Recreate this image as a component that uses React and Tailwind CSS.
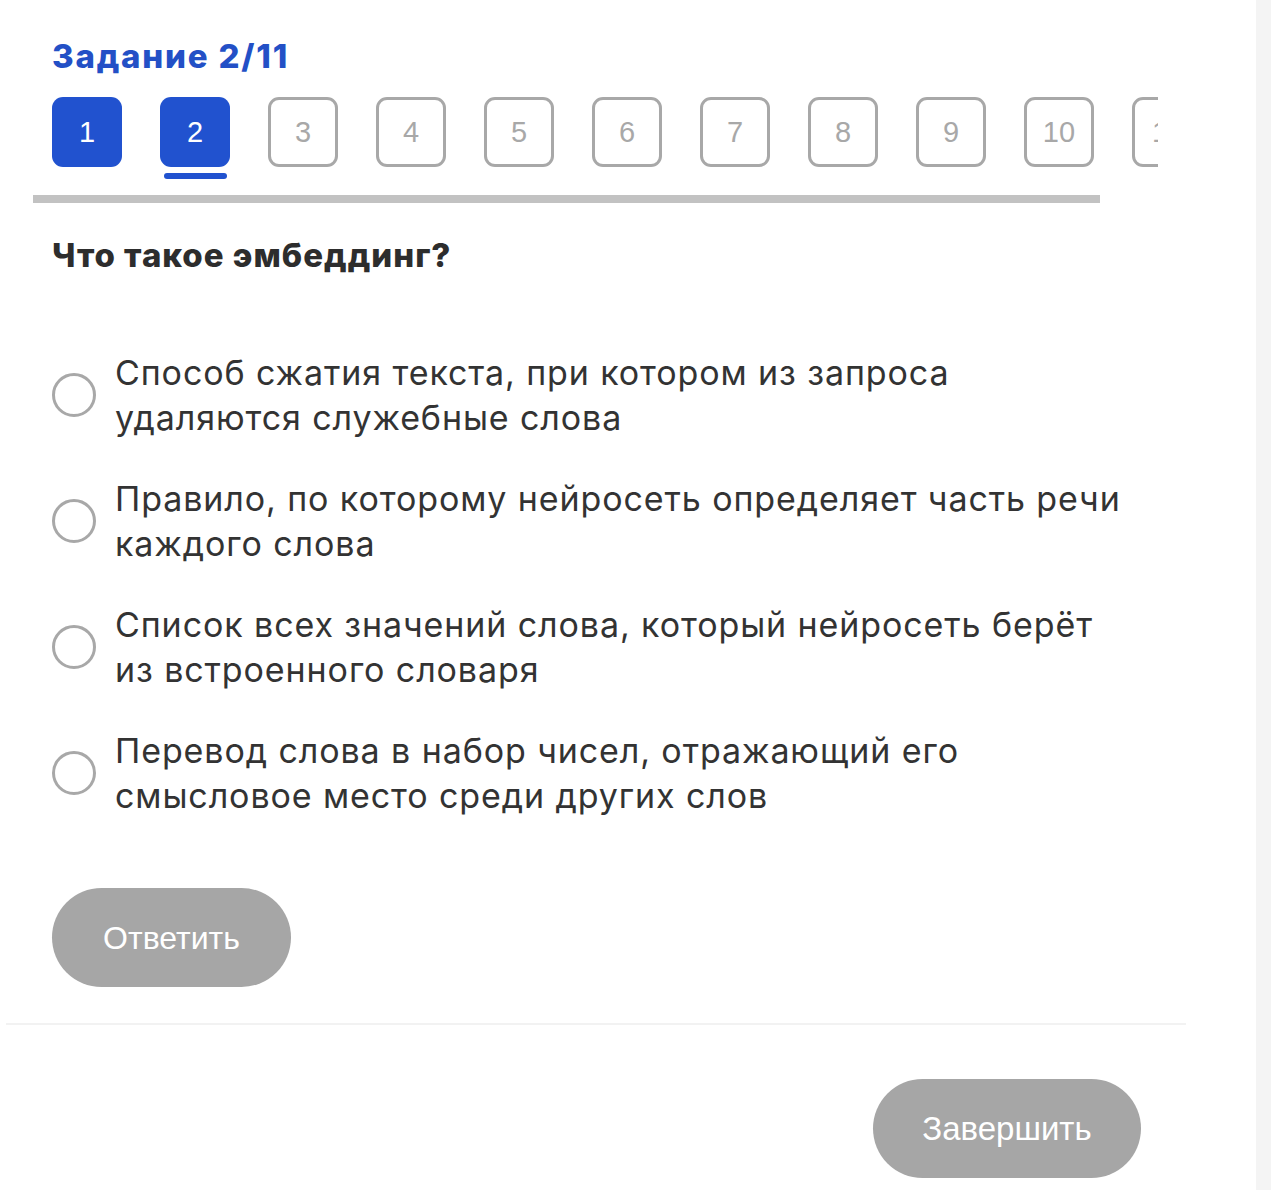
import React, { useState } from "react";

const options = [
  "Способ сжатия текста, при котором из запроса удаляются служебные слова",
  "Правило, по которому нейросеть определяет часть речи каждого слова",
  "Список всех значений слова, который нейросеть берёт из встроенного словаря",
  "Перевод слова в набор чисел, отражающий его смысловое место среди других слов",
];

const steps = [1, 2, 3, 4, 5, 6, 7, 8, 9, 10, 11];

export default function App() {
  const [current] = useState(2);
  const [picked, setPicked] = useState(null);

  return (
    <div className="flex min-h-[1190px] w-full bg-white">
      <div className="flex-1 pl-[6px]">
        <div className="w-[1180px]">
          {/* Header + steps */}
          <div className="pl-[46px] pt-[36px]">
            <h1 className="font-['Inter',sans-serif] text-[33px] font-extrabold leading-[40px] tracking-[1.8px] text-[#2350c6]">
              Задание 2/11
            </h1>
            <div className="mt-[21px] w-[1106px] overflow-hidden">
              <div className="flex gap-[38px]">
                {steps.map((n) => {
                  const done = n <= current;
                  return (
                    <div key={n} className="flex shrink-0 flex-col items-center">
                      <button
                        className={`flex h-[70px] w-[70px] items-center justify-center rounded-[11px] pt-[2px] font-['Liberation_Sans',Arial,sans-serif] text-[29px] ${
                          done ? "bg-[#2152cf] text-white" : "border-[3px] border-[#a8a8a8] text-[#a8a8a8]"
                        }`}
                      >
                        {n}
                      </button>
                      <div className={`mt-[6px] h-[6px] w-[63px] rounded-full ${n === current ? "bg-[#2152cf]" : "bg-transparent"}`} />
                    </div>
                  );
                })}
              </div>
            </div>
          </div>
          <div className="ml-[27px] mt-[16px] h-[8px] w-[1067px] bg-[#c2c2c2]" />

          {/* Question */}
          <div className="pl-[46px]">
            <h2 className="mt-[32px] font-['Inter',sans-serif] text-[33px] font-extrabold leading-[40px] tracking-[1px] text-[#2d2d2d]">
              Что такое эмбеддинг?
            </h2>

            <div className="mt-[75px] flex flex-col gap-[36px]">
              {options.map((text, i) => (
                <label key={i} className="flex cursor-pointer items-center gap-[19px]" onClick={() => setPicked(i)}>
                  <span
                    className={`flex h-[44px] w-[44px] shrink-0 items-center justify-center rounded-full border-[3px] ${
                      picked === i ? "border-[#2152cf]" : "border-[#a8a8a8]"
                    }`}
                  >
                    {picked === i && <span className="h-[22px] w-[22px] rounded-full bg-[#2152cf]" />}
                  </span>
                  <span className="max-w-[1018px] font-['Inter',sans-serif] text-[34px] leading-[45px] tracking-[0.9px] text-[#333333]">
                    {text}
                  </span>
                </label>
              ))}
            </div>

            <button className="mt-[70px] h-[99px] w-[239px] rounded-full bg-[#a6a6a6] font-['Liberation_Sans',Arial,sans-serif] text-[32px] text-white">
              Ответить
            </button>
          </div>

          <div className="mt-[36px] h-[2px] w-[1180px] bg-[#f2f2f2]" />

          <div className="flex justify-end pr-[45px] pt-[54px]">
            <button className="h-[99px] w-[268px] rounded-full bg-[#a6a6a6] font-['Liberation_Sans',Arial,sans-serif] text-[33px] text-white">
              Завершить
            </button>
          </div>
        </div>
      </div>
      <div className="w-[15px] shrink-0 bg-[#f4f4f4]" />
    </div>
  );
}
